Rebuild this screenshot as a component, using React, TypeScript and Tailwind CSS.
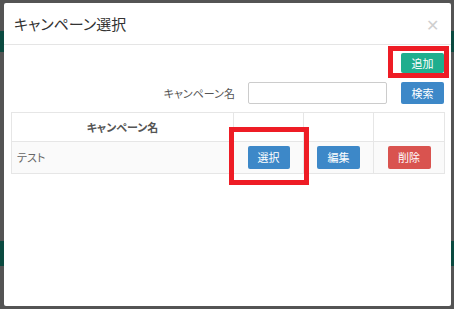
export default function App() {
  const jp = { fontFamily: '"Noto Sans CJK JP", "Noto Sans", sans-serif' };
  return (
    <div className="relative h-[309px] w-[454px] overflow-hidden bg-[#545454]" style={jp}>
      {/* page behind the backdrop */}
      <div aria-hidden="true" className="flex flex-col pt-[31px]">
        <div className="h-[21px] bg-[#0b4a40]" />
        <div className="h-[189px]" />
        <div className="h-[25px] bg-[#0b4a40]" />
      </div>

      <div className="absolute left-[4px] top-[3px] flex h-[303px] w-[447px] flex-col rounded-[2px] bg-white [font-feature-settings:'palt']">
        <div className="flex h-[42px] items-center justify-between border-b border-[#e5e5e5] pl-[10px] pr-[12px]">
          <h1 className="text-[15px] leading-none text-[#333]">キャンペーン選択</h1>
          <span className="text-[16px] leading-none text-[#cfcfcf]">✕</span>
        </div>

        <div className="flex flex-col px-[7px] pt-[8px]">
          <div className="flex justify-end">
            <button className="h-[20px] w-[43px] rounded-[2px] bg-[#1fae8e] text-[11px] text-white">追加</button>
          </div>

          <div className="mt-[9px] flex items-center justify-end">
            <span className="mr-[13px] text-[11px] text-[#555]">キャンペーン名</span>
            <input className="h-[22px] w-[139px] rounded-[2px] border border-[#ccc] bg-white" />
            <button className="ml-[14px] h-[22px] w-[43px] rounded-[2px] bg-[#3d88c8] text-[11px] text-white">検索</button>
          </div>

          <table className="mt-[8px] w-[433px] table-fixed border-collapse text-[11px] text-[#555]">
            <colgroup>
              <col className="w-[222px]" />
              <col className="w-[70px]" />
              <col className="w-[70px]" />
              <col className="w-[71px]" />
            </colgroup>
            <thead>
              <tr className="h-[29px]">
                <th className="border border-[#e6e6e6] font-bold">キャンペーン名</th>
                <th className="border border-[#e6e6e6]" />
                <th className="border border-[#e6e6e6]" />
                <th className="border border-[#e6e6e6]" />
              </tr>
            </thead>
            <tbody>
              <tr className="h-[32px] bg-[#fafafa]">
                <td className="border border-[#e6e6e6] pl-[5px] text-[#666]">テスト</td>
                <td className="border border-[#e6e6e6] text-center">
                  <button className="h-[23px] w-[42px] rounded-[2px] bg-[#3d88c8] text-white">選択</button>
                </td>
                <td className="border border-[#e6e6e6] text-center">
                  <button className="h-[23px] w-[43px] rounded-[2px] bg-[#3d88c8] text-white">編集</button>
                </td>
                <td className="border border-[#e6e6e6] text-center">
                  <button className="h-[23px] w-[43px] rounded-[2px] bg-[#d9534f] text-white">削除</button>
                </td>
              </tr>
            </tbody>
          </table>
        </div>
      </div>

      {/* annotation boxes */}
      <div className="absolute left-[388px] top-[46px] h-[32px] w-[61px] border-[5px] border-[#ee1c25]" />
      <div className="absolute left-[229px] top-[127px] h-[58px] w-[80px] border-[5px] border-[#ee1c25]" />
    </div>
  );
}
